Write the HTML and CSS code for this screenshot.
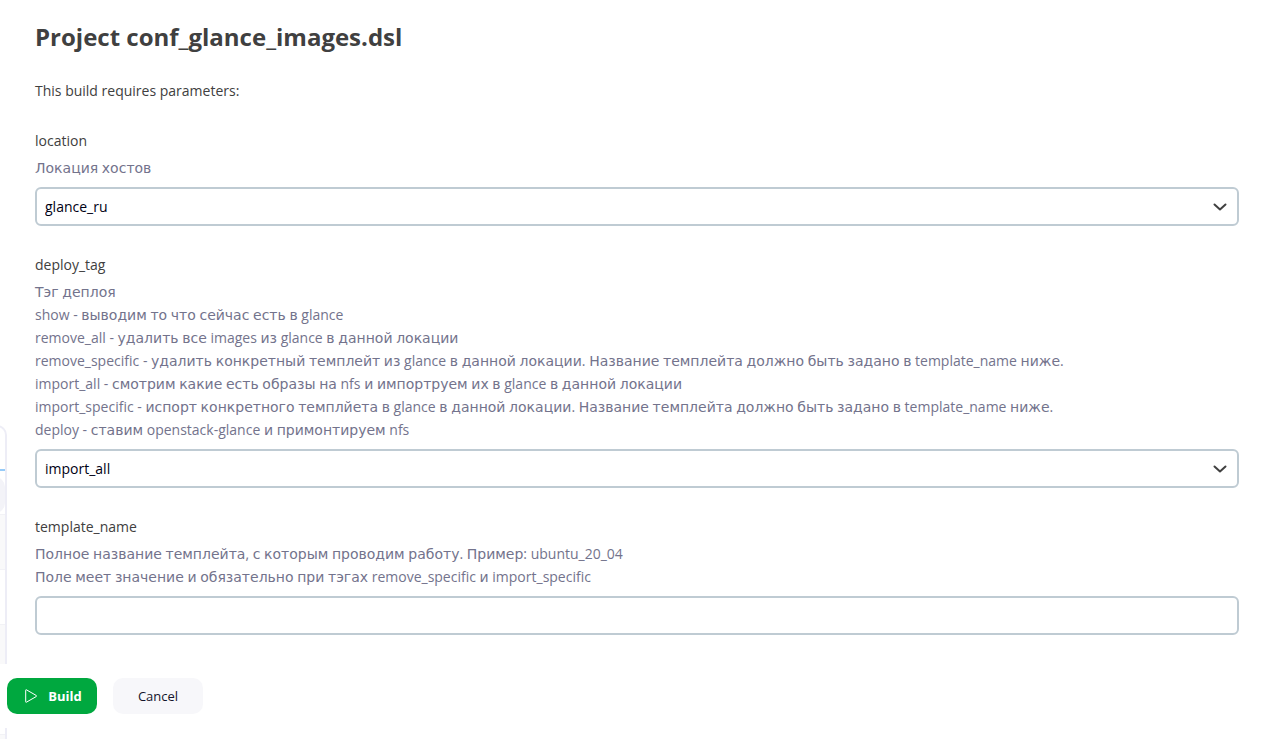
FILE: index.html
```html
<!DOCTYPE html>
<html lang="en">
<head>
<meta charset="utf-8">
<meta name="viewport" content="width=device-width, initial-scale=1">
<title>Project conf_glance_images.dsl</title>
<link rel="stylesheet" href="styles.css">
</head>
<body>
<div class="history" aria-hidden="true">
  <div class="history-line"></div>
  <div class="history-search"></div>
  <div class="history-row"></div>
  <div class="history-row"></div>
  <div class="history-row"></div>
  <div class="history-row"></div>
  <div class="history-row"></div>
</div>
<main class="page">
  <form class="form">
    <div class="content">
      <h1 class="title">Project conf_glance_images.dsl</h1>
      <p class="intro">This build requires parameters:</p>
      <div class="field">
        <label class="label" for="location">location</label>
        <p class="description"><span lang="ru">Локация</span> <span lang="ru">хостов</span></p>
        <div class="select">
          <select class="control" id="location"><option>glance_ru</option></select>
          <svg class="chevron" viewBox="0 0 14 8" aria-hidden="true"><path d="M1.5 1.500 7 6.500l5.500-5"/></svg>
        </div>
      </div>
      <div class="field">
        <label class="label" for="deploy_tag">deploy_tag</label>
        <p class="description"><span lang="ru">Тэг</span> <span lang="ru">деплоя</span><br>
          show - <span lang="ru">выводим</span> <span lang="ru">то</span> <span lang="ru">что</span> <span lang="ru">сейчас</span> <span lang="ru">есть</span> <span lang="ru">в</span> glance<br>
          remove_all - <span lang="ru">удалить</span> <span lang="ru">все</span> images <span lang="ru">из</span> glance <span lang="ru">в</span> <span lang="ru">данной</span> <span lang="ru">локации</span><br>
          remove_specific - <span lang="ru">удалить</span> <span lang="ru">конкретный</span> <span lang="ru">темплейт</span> <span lang="ru">из</span> glance <span lang="ru">в</span> <span lang="ru">данной</span> <span lang="ru">локации</span>. <span lang="ru">Название</span> <span lang="ru">темплейта</span> <span lang="ru">должно</span> <span lang="ru">быть</span> <span lang="ru">задано</span> <span lang="ru">в</span> template_name <span lang="ru">ниже</span>.<br>
          import_all - <span lang="ru">смотрим</span> <span lang="ru">какие</span> <span lang="ru">есть</span> <span lang="ru">образы</span> <span lang="ru">на</span> nfs <span lang="ru">и</span> <span lang="ru">импортруем</span> <span lang="ru">их</span> <span lang="ru">в</span> glance <span lang="ru">в</span> <span lang="ru">данной</span> <span lang="ru">локации</span><br>
          import_specific - <span lang="ru">испорт</span> <span lang="ru">конкретного</span> <span lang="ru">темплйета</span> <span lang="ru">в</span> glance <span lang="ru">в</span> <span lang="ru">данной</span> <span lang="ru">локации</span>. <span lang="ru">Название</span> <span lang="ru">темплейта</span> <span lang="ru">должно</span> <span lang="ru">быть</span> <span lang="ru">задано</span> <span lang="ru">в</span> template_name <span lang="ru">ниже</span>.<br>
          deploy - <span lang="ru">ставим</span> openstack-glance <span lang="ru">и</span> <span lang="ru">примонтируем</span> nfs</p>
        <div class="select">
          <select class="control" id="deploy_tag"><option>import_all</option></select>
          <svg class="chevron" viewBox="0 0 14 8" aria-hidden="true"><path d="M1.5 1.500 7 6.500l5.500-5"/></svg>
        </div>
      </div>
      <div class="field">
        <label class="label" for="template_name">template_name</label>
        <p class="description"><span lang="ru">Полное</span> <span lang="ru">название</span> <span lang="ru">темплейта</span>, <span lang="ru">с</span> <span lang="ru">которым</span> <span lang="ru">проводим</span> <span lang="ru">работу</span>. <span lang="ru">Пример</span>: ubuntu_20_04<br>
          <span lang="ru">Поле</span> <span lang="ru">меет</span> <span lang="ru">значение</span> <span lang="ru">и</span> <span lang="ru">обязательно</span> <span lang="ru">при</span> <span lang="ru">тэгах</span> remove_specific <span lang="ru">и</span> import_specific</p>
        <input class="control" id="template_name" type="text">
      </div>
    </div>
    <div class="actions">
      <button class="button button-primary" type="submit">
        <svg class="play" viewBox="0 0 14 14" aria-hidden="true"><path d="M1.700 1.200v11.600q0 .7.700.4L12.300 7.500q.7-.5 0-1L2.400.8q-.7-.3-.7.4z"/></svg>
        Build
      </button>
      <button class="button" type="button">Cancel</button>
    </div>
  </form>
</main>
</body>
</html>
```

FILE: styles.css
```css
* {
  box-sizing: border-box;
}

body {
  margin: 0;
  min-height: 100vh;
  position: relative;
  background: #fff;
  color: #404040;
  font-family: "Open Sans", "DejaVu Sans", sans-serif;
  font-size: 14px;
  line-height: 23px;
}

/* Edge of the build history card that continues under the form */
.history {
  position: absolute;
  top: 425px;
  bottom: 0;
  left: -20px;
  width: 27px;
  padding-top: 42px;
  border: 2px solid #ededf6;
  border-bottom: 0;
  border-radius: 10px 10px 0 0;
  overflow: hidden;
}

.history-line {
  height: 2px;
  margin-bottom: 6px;
  background: #97cbf8;
}

.history-search {
  height: 36px;
  margin-bottom: 1px;
  border-radius: 10px;
  background: #f3f3f8;
}

.history-row {
  height: 55px;
  border-top: 1px solid #f2f2f6;
}

.history-row:nth-child(odd) {
  background: #f9f9fa;
}

.page {
  position: relative;
}

.form {
  display: flex;
  flex-direction: column;
  min-height: 100vh;
  padding: 19px 0 11px;
}

.content {
  padding: 0 28px 0 35px;
}

.title {
  margin: 0 0 25px;
  font-size: 24px;
  line-height: 35px;
  font-weight: 700;
}

.intro {
  margin: 0 0 27px;
}

.field {
  margin-bottom: 27px;
}

.label {
  display: block;
  margin-bottom: 4px;
}

.description {
  margin: 0 0 8px;
  color: #73738c;
}

.description :lang(ru) {
  font-family: "DejaVu Sans", sans-serif;
  line-height: 1;
}

.select {
  display: grid;
  align-items: center;
}

.select > * {
  grid-area: 1 / 1;
}

.control {
  display: block;
  width: 100%;
  height: 39px;
  margin: 0;
  padding: 0 8px;
  border: 2px solid #bfcbd3;
  border-radius: 6px;
  background: #fff;
  color: #000014;
  font: inherit;
  appearance: none;
}

.chevron {
  justify-self: end;
  width: 14px;
  height: 8px;
  margin-right: 12px;
  fill: none;
  stroke: #404040;
  stroke-width: 2;
  stroke-linecap: round;
  stroke-linejoin: round;
  pointer-events: none;
}

.actions {
  position: sticky;
  bottom: 11px;
  display: flex;
  gap: 16px;
  margin-top: auto;
  padding: 14px 7px;
  background: #fff;
}

.button {
  display: inline-flex;
  align-items: center;
  justify-content: center;
  gap: 10px;
  width: 90px;
  height: 36px;
  padding: 0;
  border: 0;
  border-radius: 10px;
  background: #f7f7fa;
  color: #14142b;
  font: inherit;
  font-size: 13px;
}

.button-primary {
  padding-left: 2px;
  background: #00a83f;
  color: #fff;
  font-weight: 700;
}

.play {
  width: 14px;
  height: 14px;
  fill: none;
  stroke: #fff;
  stroke-width: 1;
}
```
